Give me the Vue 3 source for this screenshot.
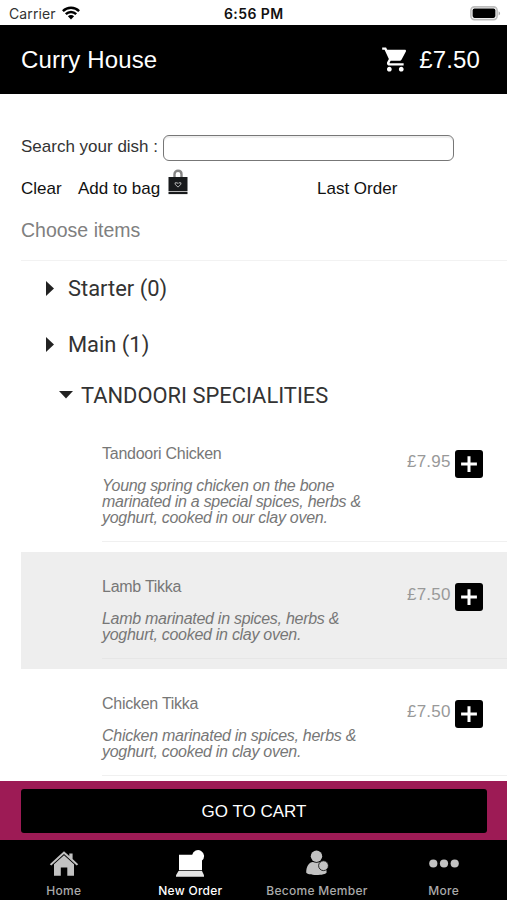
<script setup>
const categories = [
  { name: 'Starter (0)', cls: 'starter' },
  { name: 'Main (1)', cls: 'main' },
]
const dishes = [
  {
    name: 'Tandoori Chicken',
    price: '£7.95',
    lines: ['Young spring chicken on the bone', 'marinated in a special spices, herbs &', 'yoghurt, cooked in our clay oven.'],
  },
  {
    name: 'Lamb Tikka',
    price: '£7.50',
    lines: ['Lamb marinated in spices, herbs &', 'yoghurt, cooked in clay oven.'],
    shaded: true,
  },
  {
    name: 'Chicken Tikka',
    price: '£7.50',
    lines: ['Chicken marinated in spices, herbs &', 'yoghurt, cooked in clay oven.'],
  },
]
</script>

<template>
  <div class="screen">
    <div class="status">
      <div class="carrier">
        <span>Carrier</span>
        <svg width="18" height="14" viewBox="0 0 18 14">
          <g fill="none" stroke="#000" stroke-width="2.4">
            <path d="M.9 5.1C5.4.6 12.6.6 17.1 5.1" />
            <path d="M3.8 8.2c2.9-2.9 7.5-2.9 10.4 0" />
          </g>
          <path d="M5.9 10.3c1.8-1.7 4.4-1.7 6.2 0L9 13.5z" />
        </svg>
      </div>
      <span class="time">6:56 PM</span>
      <svg class="battery" width="31" height="15" viewBox="0 0 31 15">
        <rect x=".9" y=".9" width="26.2" height="12.7" rx="3.5" fill="#fff" stroke="#bdbdbd" stroke-width="1.6" />
        <rect x="2.6" y="2.6" width="22.8" height="9.3" rx="1.8" />
        <path d="M28.6 5.2c2 .9 2 3.3 0 4.2z" fill="#aaa" />
      </svg>
    </div>

    <header class="header">
      <span>Curry House</span>
      <div class="total">
        <svg width="28.6" height="29" viewBox="0 0 24 24" preserveAspectRatio="none" fill="#fff">
          <path d="M7 18c-1.1 0-1.99.9-1.99 2S5.900 22 7 22s2-.9 2-2-.9-2-2-2zM1 2v2h2l3.600 7.590-1.350 2.450c-.16.280-.250.610-.250.960 0 1.100.9 2 2 2h12v-2H7.420c-.140 0-.250-.110-.250-.250l.030-.120.900-1.630h7.450c.750 0 1.410-.410 1.750-1.030l3.580-6.490c.080-.140.120-.310.120-.480 0-.550-.450-1-1-1H5.210l-.940-2H1zm16 16c-1.100 0-1.990.9-1.990 2s.890 2 1.990 2 2-.9 2-2-.9-2-2-2z" />
        </svg>
        <span>£7.50</span>
      </div>
    </header>

    <main class="content">
      <label class="search">
        <span>Search your dish :</span>
        <input type="text" />
      </label>
      <div class="actions">
        <span class="clear">Clear</span>
        <span class="add">Add to bag</span>
        <svg class="bag" width="20" height="26" viewBox="0 0 20 26">
          <path d="M6.500 9V5.200C6.500 .6 13.500 .6 13.500 5.200V9" fill="none" stroke="#858585" stroke-width="2.400" />
          <rect x=".5" y="8" width="19" height="14.300" fill="#181a1c" />
          <rect x=".5" y="23" width="19" height="2.100" fill="#181a1c" />
          <path d="M10 18.100L7.100 15.300V13.800H9.200L10 14.600L10.800 13.800H12.900V15.300Z" fill="none" stroke="#c5c5c5" stroke-width=".9" />
        </svg>
        <span class="last">Last Order</span>
      </div>
      <h2>Choose items</h2>

      <div class="menu">
        <div v-for="c in categories" :key="c.name" class="category" :class="c.cls">
          <svg width="8" height="15" viewBox="0 0 8 15"><path d="M0 0L8 7.500L0 15z" fill="#222" /></svg>
          <span>{{ c.name }}</span>
        </div>
        <div class="subcategory">
          <svg width="14" height="8" viewBox="0 0 14 8"><path d="M0 0H14L7 7.600z" fill="#222" /></svg>
          <span>TANDOORI SPECIALITIES</span>
        </div>
        <article v-for="d in dishes" :key="d.name" class="dish" :class="{ shaded: d.shaded }">
          <div class="row">
            <div class="info">
              <h3>{{ d.name }}</h3>
              <p><span v-for="l in d.lines" :key="l">{{ l }}</span></p>
            </div>
            <span class="price">{{ d.price }}</span>
            <button class="plus">
              <svg width="28" height="28" viewBox="0 0 28 28"><path d="M14 6.200V22M6.100 14H21.900" stroke="#fff" stroke-width="3" /></svg>
            </button>
          </div>
        </article>
      </div>
    </main>

    <div class="checkout"><button>GO TO CART</button></div>

    <nav class="tabs">
      <div class="tab">
        <svg width="30" height="28" viewBox="0 0 30 28" fill="#c2c2c2">
          <path d="M.8 14.300L15 1.300L20.300 6.100V3.500H23.600V9.100L29.200 14.300L27.700 15.500L15 4.100L2.300 15.500z" />
          <path d="M5 14.200L15 5.300L25 14.200V25.800H18.300V17.500H11.800V25.800H5z" />
        </svg>
        <span>Home</span>
      </div>
      <div class="tab active">
        <svg width="30" height="28" viewBox="0 0 30 28">
          <path d="M4 4.800H17.200A6 6 0 1 1 27 10.600V20.300H4z" fill="#fff" />
          <path d="M3.500 21.100H27L29 25.200V26.700H1V25.200z" fill="#e5e5e5" />
        </svg>
        <span>New Order</span>
      </div>
      <div class="tab member">
        <svg width="30" height="28" viewBox="0 0 30 28" fill="#c2c2c2">
          <circle cx="14.500" cy="6.300" r="5.700" />
          <path d="M4.200 22.600c0-6.200 3-10.600 6.700-10.600 2.200 1.100 5.100 1.100 7.300 0 3.800.3 6.400 5 6.400 10.600-.6 3.300-19.800 3.300-20.400 0z" />
          <circle cx="21.500" cy="15.700" r="4.900" stroke="#000" stroke-width=".8" />
        </svg>
        <span>Become Member</span>
      </div>
      <div class="tab more">
        <svg width="30" height="28" viewBox="0 0 30 28" fill="#c2c2c2">
          <circle cx="4.300" cy="13.500" r="4.100" /><circle cx="15" cy="13.500" r="4.100" /><circle cx="25.700" cy="13.500" r="4.100" />
        </svg>
        <span>More</span>
      </div>
    </nav>
  </div>
</template>

<style>
body { margin: 0; background: #fff; }
</style>

<style scoped>
* { box-sizing: border-box; }
svg { display: block; flex: none; }
h2, h3, p { margin: 0; font-weight: 400; }
button { border: 0; padding: 0; }
.screen {
  width: 507px; height: 900px; overflow: hidden;
  display: flex; flex-direction: column;
  font-family: "Liberation Sans", Arial, sans-serif;
  white-space: nowrap; background: #fff; color: #222;
}
.status {
  flex: none; height: 25px; padding: 2px 6px 0 9px;
  display: grid; grid-template-columns: 215px auto 1fr; align-items: center;
  font-family: Inter, sans-serif; font-size: 14px; line-height: 22px;
}
.carrier { display: flex; align-items: center; gap: 6px; color: #333; letter-spacing: .1px; }
.carrier svg { margin-top: -2px; }
.time { font-weight: 600; color: #111; letter-spacing: .4px; }
.battery { justify-self: end; }
.header {
  flex: none; height: 69px; padding: 0 27px 0 21px; background: #000; color: #fff;
  display: flex; align-items: center; justify-content: space-between; font-size: 24px; letter-spacing: .15px;
}
.total { display: flex; align-items: center; gap: 10px; }
.content { flex: 1; min-height: 0; overflow: hidden; padding: 41px 0 0 21px; }
.search { display: flex; align-items: center; height: 26px; font-size: 17px; color: #333; }
.search span { width: 142px; margin-top: -2px; }
.search input {
  width: 291px; height: 26px; border: 1.500px solid #777; border-radius: 6px;
  background: #fff; box-shadow: inset 0 2px 1px #eee; outline: 0;
}
.actions { display: flex; align-items: center; height: 54px; padding-top: 1px; font-size: 17px; color: #111; }
.clear { width: 57px; }
.add { width: 90px; }
.bag { margin-top: -13px; }
.last { margin-left: 129px; }
h2 { height: 45px; line-height: 31px; font-size: 19.500px; color: #808080; }
.menu { border-top: 1px solid #f2f2f2; }
.category, .subcategory { display: flex; align-items: center; font-family: Roboto, sans-serif; font-size: 21.900px; color: #333; }
.category { height: 56px; padding-left: 25px; gap: 14px; }
.starter { height: 54px; }
.main { padding-top: 2px; }
.subcategory { height: 44px; padding-left: 38px; gap: 8px; margin: 2px 0; }
.dish { padding: 24px 0 10px 81px; }
.row { display: flex; align-items: flex-start; border-bottom: 1px solid #f0f0f0; }
.dish.shaded { background: #eee; }
.dish.shaded .row { border-color: #e6e6e6; }
.info { width: 305px; padding-bottom: 15px; font-size: 16px; color: #777; }
h3 { font-size: 16px; line-height: 22px; letter-spacing: -.26px; }
.info p { margin-top: 13px; font-style: italic; line-height: 16px; letter-spacing: -.28px; }
.info p span { display: block; }
.price { width: 48px; margin-top: 8px; font-size: 17px; line-height: 22px; letter-spacing: .2px; color: #999; }
.plus { width: 28px; height: 28px; margin-top: 7px; border-radius: 3px; background: #000; }
.checkout { flex: none; height: 59px; padding: 8px 20px 7px 21px; background: #9d1b55; }
.checkout button {
  display: block; width: 100%; height: 44px; padding-top: 1px; border-radius: 3px; background: #000; color: #fff;
  font: 17px "Liberation Sans", Arial, sans-serif;
}
.tabs { flex: none; height: 60px; background: #000; display: grid; grid-template-columns: repeat(4, 126.600px); }
.tab {
  display: flex; flex-direction: column; align-items: center; padding: 10px 0 0 1px; color: #aaa;
  font: 500 12px/16px Inter, sans-serif; letter-spacing: .28px;
}
.tab span { margin-top: 5px; }
.active { color: #fff; }
</style>
